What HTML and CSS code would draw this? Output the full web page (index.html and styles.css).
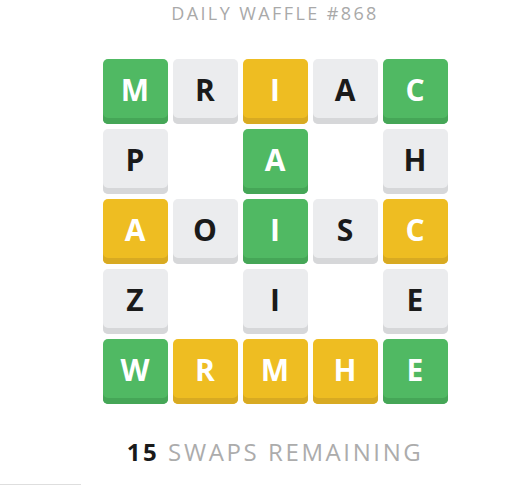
FILE: index.html
```html
<!DOCTYPE html>
<html>
<head>
<meta charset="utf-8">
<link rel="stylesheet" href="styles.css">
</head>
<body>
<div class="app">
  <header class="title">DAILY WAFFLE #868</header>
  <div class="board">
    <div class="tile green">M</div>
    <div class="tile gray">R</div>
    <div class="tile yellow">I</div>
    <div class="tile gray">A</div>
    <div class="tile green">C</div>

    <div class="tile gray">P</div>
    <div class="hole"></div>
    <div class="tile green">A</div>
    <div class="hole"></div>
    <div class="tile gray">H</div>

    <div class="tile yellow">A</div>
    <div class="tile gray">O</div>
    <div class="tile green">I</div>
    <div class="tile gray">S</div>
    <div class="tile yellow">C</div>

    <div class="tile gray">Z</div>
    <div class="hole"></div>
    <div class="tile gray">I</div>
    <div class="hole"></div>
    <div class="tile gray">E</div>

    <div class="tile green">W</div>
    <div class="tile yellow">R</div>
    <div class="tile yellow">M</div>
    <div class="tile yellow">H</div>
    <div class="tile green">E</div>
  </div>
  <div class="swaps"><span class="count">15</span> SWAPS REMAINING</div>
</div>
<div class="footer-line"></div>
</body>
</html>
```

FILE: styles.css
```css
html, body {
  margin: 0;
  padding: 0;
  background: #ffffff;
  overflow: hidden;
}
body {
  width: 524px;
  height: 486px;
  position: relative;
  font-family: "Open Sans", "DejaVu Sans", sans-serif;
}
.app {
  padding-left: 26px;
  display: flex;
  flex-direction: column;
  align-items: center;
}
.title {
  margin-top: 1px;
  height: 24px;
  line-height: 24px;
  font-size: 18px;
  letter-spacing: 2.4px;
  color: #a9a9a9;
  font-weight: 400;
}
.board {
  margin-top: 34px;
  display: grid;
  grid-template-columns: repeat(5, 65px);
  grid-auto-rows: 65px;
  column-gap: 5px;
  row-gap: 5px;
}
.tile {
  border-radius: 5px;
  display: flex;
  align-items: center;
  justify-content: center;
  padding-bottom: 5px;
  box-sizing: border-box;
  font-family: "Open Sans", sans-serif;
  font-weight: 700;
  font-size: 30px;
}
.green {
  background: #50b963;
  box-shadow: inset 0 -6px 0 #45a657;
  color: #ffffff;
}
.yellow {
  background: #eebd22;
  box-shadow: inset 0 -6px 0 #d8aa22;
  color: #ffffff;
}
.gray {
  background: #ebecee;
  box-shadow: inset 0 -6px 0 #d6d7d9;
  color: #1a1a1a;
}
.swaps {
  margin-top: 31px;
  font-size: 24px;
  letter-spacing: 2.6px;
  color: #acacac;
}
.count {
  color: #1a1a1a;
  font-weight: 700;
}
.footer-line {
  position: absolute;
  left: 0;
  top: 484px;
  width: 81px;
  height: 1px;
  background: #dedede;
}
```
